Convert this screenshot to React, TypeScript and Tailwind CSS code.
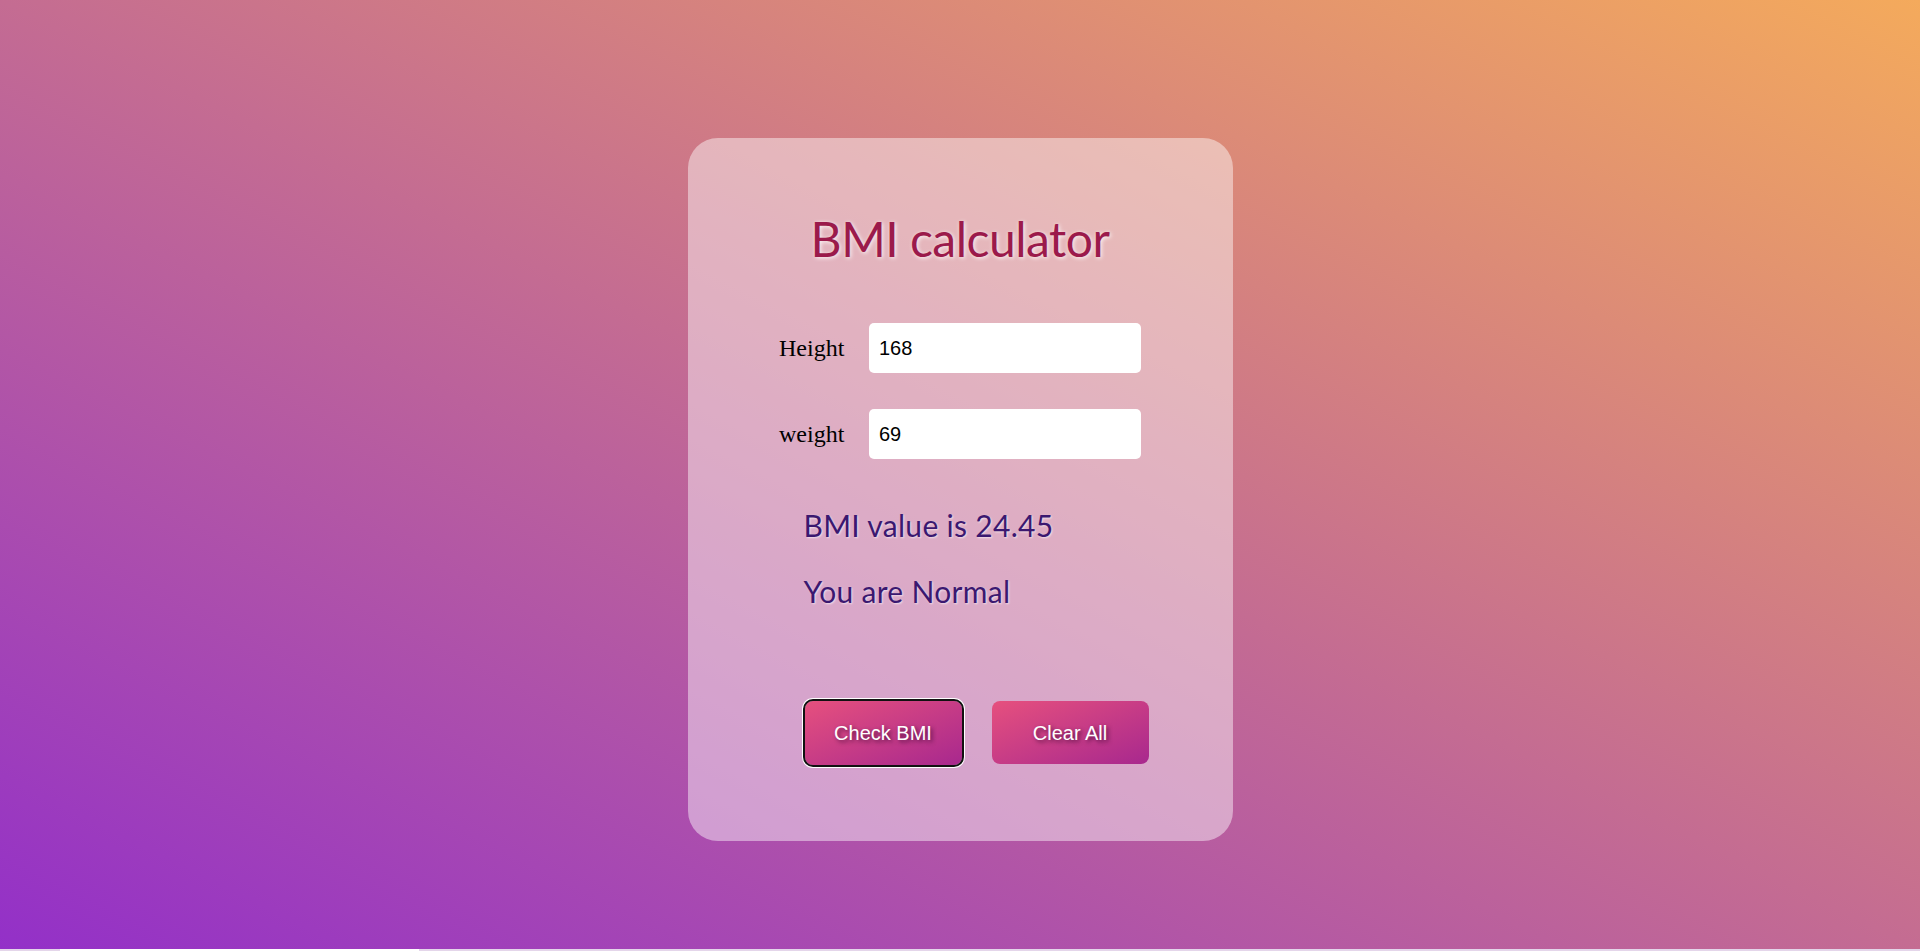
export default function App() {
  return (
    <div className="w-full">
      <div className="h-[949px] w-full bg-[linear-gradient(to_top_right,#9330c8_0%,#c46c92_50%,#f4aa5c_100%)] flex justify-center pt-[138px]">
        <div className="w-[545px] h-[703px] rounded-[30px] bg-white/45 flex flex-col">
          <h1 className="mt-[77px] text-center text-[48px] leading-none tracking-[-0.5px] text-[#9b1a4b] font-['Lato',sans-serif] [text-shadow:1px_1px_4px_rgba(255,255,255,0.9)]">
            BMI calculator
          </h1>

          <div className="mt-[60px] flex flex-col gap-[36px]">
            <div className="h-[50px] flex items-center justify-center gap-[22px]">
              <label className="w-[68px] text-[24px] text-black font-['Liberation_Serif',serif]">Height</label>
              <input
                defaultValue="168"
                className="w-[272px] h-[50px] rounded-[5px] bg-white px-[10px] text-[20px] text-black outline-none font-['Liberation_Sans',Arial,sans-serif]"
              />
            </div>
            <div className="h-[50px] flex items-center justify-center gap-[22px]">
              <label className="w-[68px] text-[24px] text-black font-['Liberation_Serif',serif]">weight</label>
              <input
                defaultValue="69"
                className="w-[272px] h-[50px] rounded-[5px] bg-white px-[10px] text-[20px] text-black outline-none font-['Liberation_Sans',Arial,sans-serif]"
              />
            </div>
          </div>

          <div className="pl-[116px] font-['Lato',sans-serif] text-[30px] leading-none tracking-[0.3px] text-[#3b1870] [text-shadow:1px_1px_2px_rgba(255,255,255,0.6)]">
            <p className="mt-[51px]">BMI value is 24.45</p>
            <p className="mt-[36px]">You are Normal</p>
          </div>

          <div className="mt-[95px] pl-[117px] flex gap-[30px]">
            <button className="w-[157px] h-[64px] rounded-[8px] bg-[linear-gradient(to_bottom_right,#e6507e,#a8288e)] text-white text-[20px] font-['Liberation_Sans',Arial,sans-serif] [text-shadow:2px_2px_4px_rgba(40,0,40,0.7)] outline-2 outline-[#111] shadow-[0_0_0_3px_#fff]">
              Check BMI
            </button>
            <button className="w-[157px] h-[63px] rounded-[8px] bg-[linear-gradient(to_bottom_right,#e6507e,#a8288e)] text-white text-[20px] font-['Liberation_Sans',Arial,sans-serif] [text-shadow:2px_2px_4px_rgba(40,0,40,0.7)]">
              Clear All
            </button>
          </div>
        </div>
      </div>
      <div className="h-[2px] w-full bg-[#e4d6ea] pl-[60px]">
        <div className="h-[2px] w-[359px] bg-white" />
      </div>
    </div>
  );
}
